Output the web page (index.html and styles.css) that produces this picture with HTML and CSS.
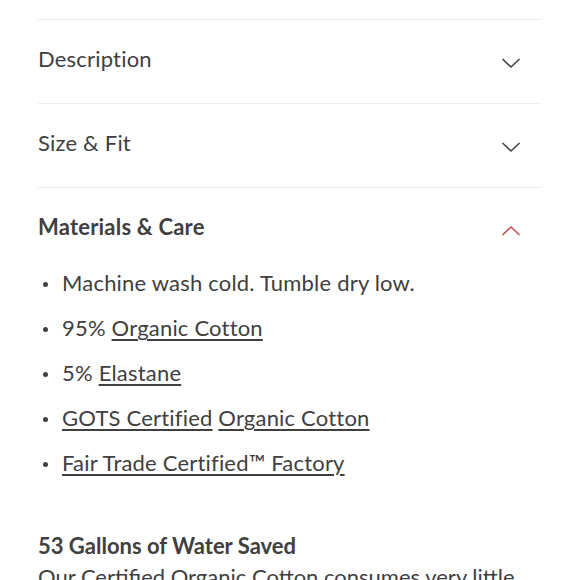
FILE: index.html
```html
<!DOCTYPE html>
<html>
<head>
<meta charset="utf-8">
<link rel="stylesheet" href="styles.css">
</head>
<body>
<div class="page">
  <div class="section">
    <div class="header">
      <span class="title">Description</span>
      <svg class="chev" width="20" height="12" viewBox="0 0 20 12"><path d="M1.5 2 L10 10 L18.5 2" fill="none" stroke="#444" stroke-width="1.6"/></svg>
    </div>
  </div>
  <div class="section">
    <div class="header">
      <span class="title">Size &amp; Fit</span>
      <svg class="chev" width="20" height="12" viewBox="0 0 20 12"><path d="M1.5 2 L10 10 L18.5 2" fill="none" stroke="#444" stroke-width="1.6"/></svg>
    </div>
  </div>
  <div class="section open">
    <div class="header">
      <span class="title bold">Materials &amp; Care</span>
      <svg class="chev" width="20" height="12" viewBox="0 0 20 12"><path d="M1.5 10 L10 2 L18.5 10" fill="none" stroke="#c4514b" stroke-width="1.6"/></svg>
    </div>
    <ul class="list">
      <li>Machine wash cold. Tumble dry low.</li>
      <li>95% <a>Organic Cotton</a></li>
      <li>5% <a>Elastane</a></li>
      <li><a>GOTS Certified</a> <a>Organic Cotton</a></li>
      <li><a>Fair Trade Certified™ Factory</a></li>
    </ul>
    <div class="impact">
      <h3>53 Gallons of Water Saved</h3>
      <p>Our Certified Organic Cotton consumes very little water compared to conventional cotton.</p>
    </div>
  </div>
</div>
</body>
</html>
```
FILE: styles.css
```css
html, body {
  margin: 0;
  padding: 0;
  background: #fff;
}
body {
  font-family: "Lato", "Noto Sans", sans-serif;
  color: #404040;
  overflow: hidden;
}
.page {
  padding: 19px 38px 0 38px;
}
.section {
  border-top: 1.5px solid #eeeeee;
}
.header {
  height: 83px;
  display: flex;
  align-items: center;
  justify-content: space-between;
  padding-right: 21px;
}
.title {
  font-size: 22px;
  letter-spacing: 0.2px;
  margin-bottom: 7px;
}
.title.bold {
  font-weight: 700;
}
.chev {
  display: block;
  margin-top: 2px;
}
.list {
  margin: 0;
  padding: 0 0 0 24px;
  font-size: 22px;
  letter-spacing: 0.2px;
  list-style: none;
}
.list li {
  height: 45px;
  line-height: 24px;
  position: relative;
}
.list li::before {
  content: "";
  position: absolute;
  left: -19px;
  top: 11px;
  width: 5px;
  height: 5px;
  border-radius: 50%;
  background: #404040;
}
.list a {
  text-decoration: underline;
  text-underline-offset: 3px;
  text-decoration-thickness: 1.5px;
}
.impact {
  padding-top: 36px;
}
.impact h3 {
  margin: 0;
  font-size: 22px;
  font-weight: 700;
  line-height: 28px;
}
.impact p {
  margin: 3px 0 0;
  font-size: 22px;
  line-height: 28px;
}
```
